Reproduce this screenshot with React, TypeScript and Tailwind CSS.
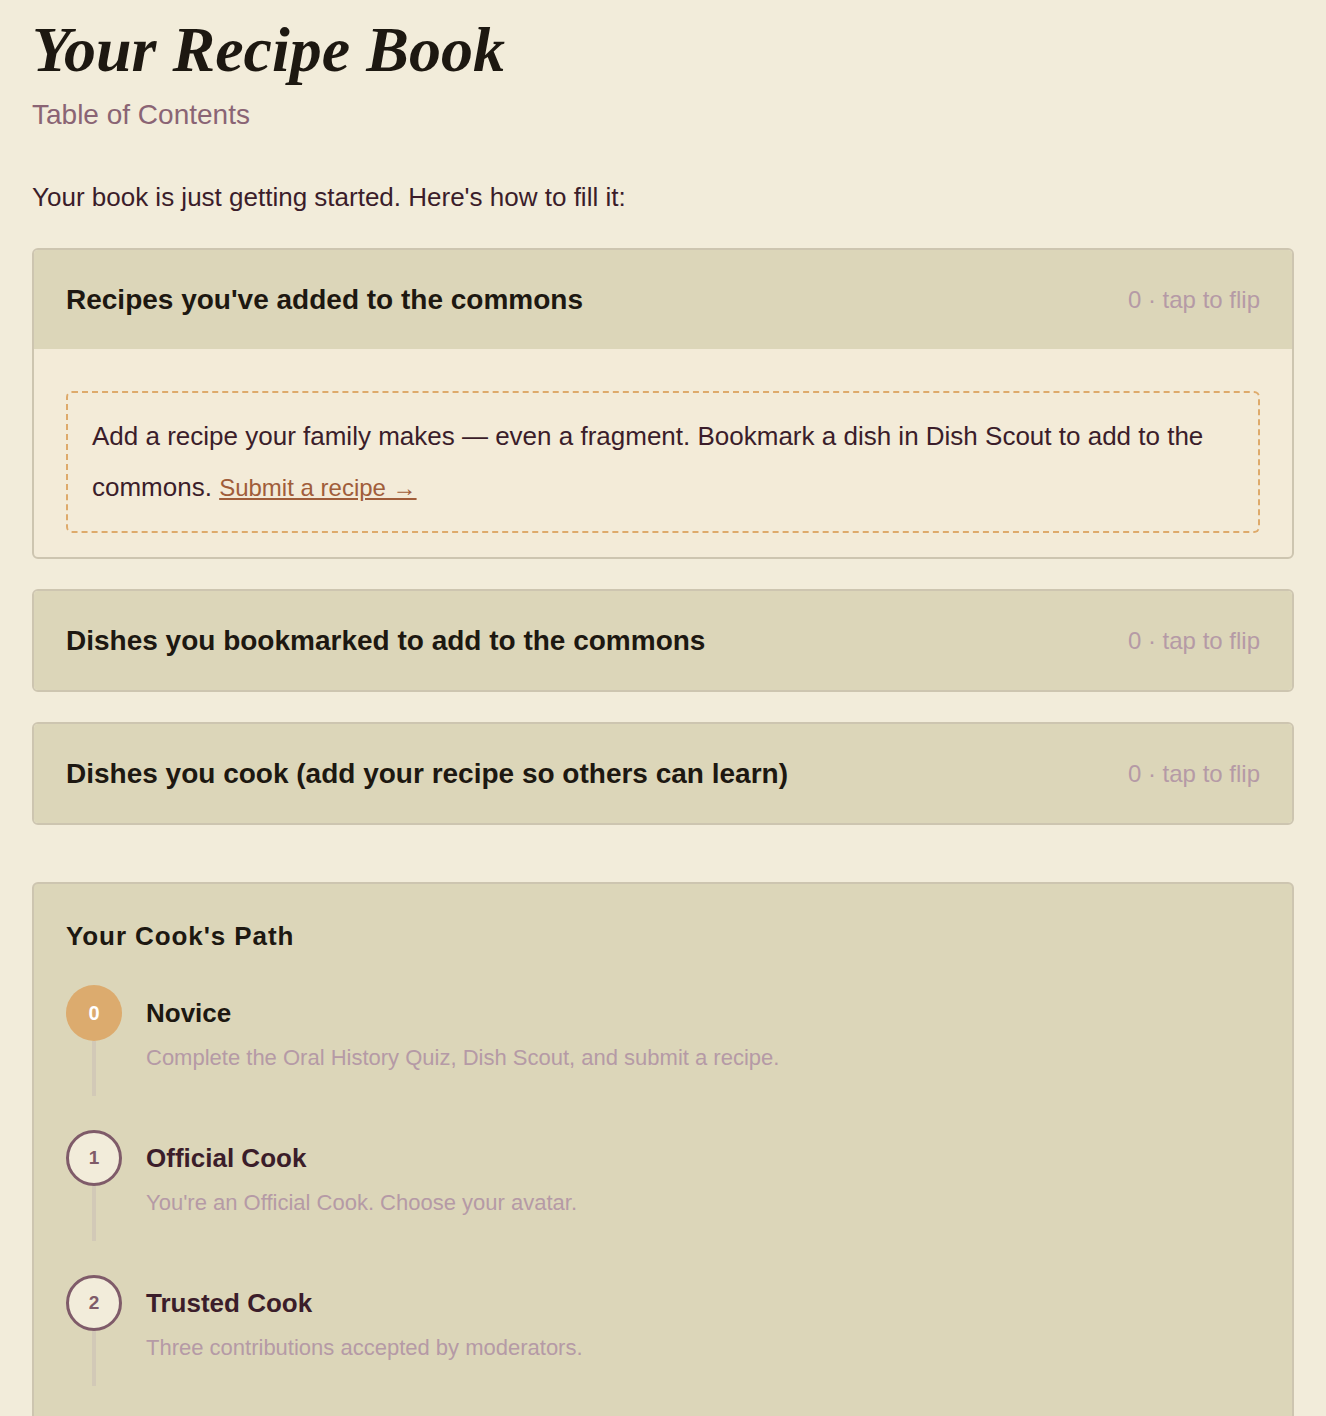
import React from "react";

const sections = [
  { title: "Recipes you've added to the commons", count: 0, open: true },
  { title: "Dishes you bookmarked to add to the commons", count: 0, open: false },
  { title: "Dishes you cook (add your recipe so others can learn)", count: 0, open: false },
];

const steps = [
  { n: 0, title: "Novice", desc: "Complete the Oral History Quiz, Dish Scout, and submit a recipe.", done: true },
  { n: 1, title: "Official Cook", desc: "You're an Official Cook. Choose your avatar.", done: false },
  { n: 2, title: "Trusted Cook", desc: "Three contributions accepted by moderators.", done: false },
  { n: 3, title: "Master Cook", desc: "Ten contributions accepted by moderators.", done: false },
];

export default function App() {
  return (
    <main className="min-h-screen bg-[#f2ecda] px-8 pt-[14px] pb-16 font-['Liberation_Sans',Arial,sans-serif]">
      <h1 className="font-['Liberation_Serif','Times_New_Roman',serif] text-[64px] leading-[72px] font-bold italic text-[#1d1811]">
        Your Recipe Book
      </h1>
      <p className="mt-[11px] text-[28px] leading-[36px] text-[#8a6474]">Table of Contents</p>

      <p className="mt-[46px] text-[26px] leading-[36px] text-[#3b1d2a]">
        Your book is just getting started. Here's how to fill it:
      </p>

      <div className="mt-[33px] flex flex-col gap-[30px]">
        {sections.map((s) => (
          <section
            key={s.title}
            className="overflow-hidden rounded-md border-2 border-[#cdc5b0] bg-[#f3ebd8]"
          >
            <div className="flex items-center justify-between bg-[#dcd6b9] px-8 py-8">
              <h2 className="text-[28px] leading-[35px] font-bold text-[#1d1811]">{s.title}</h2>
              <span className="text-[24px] leading-[35px] text-[#b59aa6]">
                {s.count} · tap to flip
              </span>
            </div>
            {s.open && (
              <div className="px-8 pt-[42px] pb-[24px]">
                <div className="rounded-md border-2 border-dashed border-[#deaa6b] px-6 py-[18px] text-[26px] leading-[51px] text-[#3b1d2a]">
                  Add a recipe your family makes — even a fragment. Bookmark a dish in Dish Scout to add to the
                  commons.{" "}
                  <a href="#" className="text-[24px] text-[#a05d3a] underline underline-offset-2">
                    Submit a recipe →
                  </a>
                </div>
              </div>
            )}
          </section>
        ))}
      </div>

      <section className="mt-[57px] rounded-md border-2 border-[#cdc5b0] bg-[#dcd6b9] px-8 pt-8 pb-8">
        <h3 className="text-[26px] leading-[40px] font-bold tracking-[0.035em] text-[#1d1811]">Your Cook's Path</h3>
        <ol className="mt-[29px]">
          {steps.map((st) => (
            <li key={st.n} className="flex gap-6 pb-[34px]">
              <div className="flex w-14 shrink-0 flex-col items-center">
                {st.done ? (
                  <div className="flex h-14 w-14 items-center justify-center rounded-full bg-[#dcab6e] text-[20px] font-bold text-white">
                    {st.n}
                  </div>
                ) : (
                  <div className="flex h-14 w-14 items-center justify-center rounded-full border-[3px] border-[#7f5b69] bg-[#f2ecda] text-[19px] font-bold text-[#7f5b69]">
                    {st.n}
                  </div>
                )}
                <div className="h-[55px] w-1 bg-[#d2c9b7]" />
              </div>
              <div className="pt-[9px]">
                <div
                  className={
                    st.done
                      ? "text-[26px] leading-[39px] font-bold text-[#1d1811]"
                      : "text-[26px] leading-[39px] font-bold text-[#3b1d2a]"
                  }
                >
                  {st.title}
                </div>
                <p className="mt-[10px] text-[22px] leading-[30px] text-[#b59aa6]">{st.desc}</p>
              </div>
            </li>
          ))}
        </ol>
      </section>
    </main>
  );
}
